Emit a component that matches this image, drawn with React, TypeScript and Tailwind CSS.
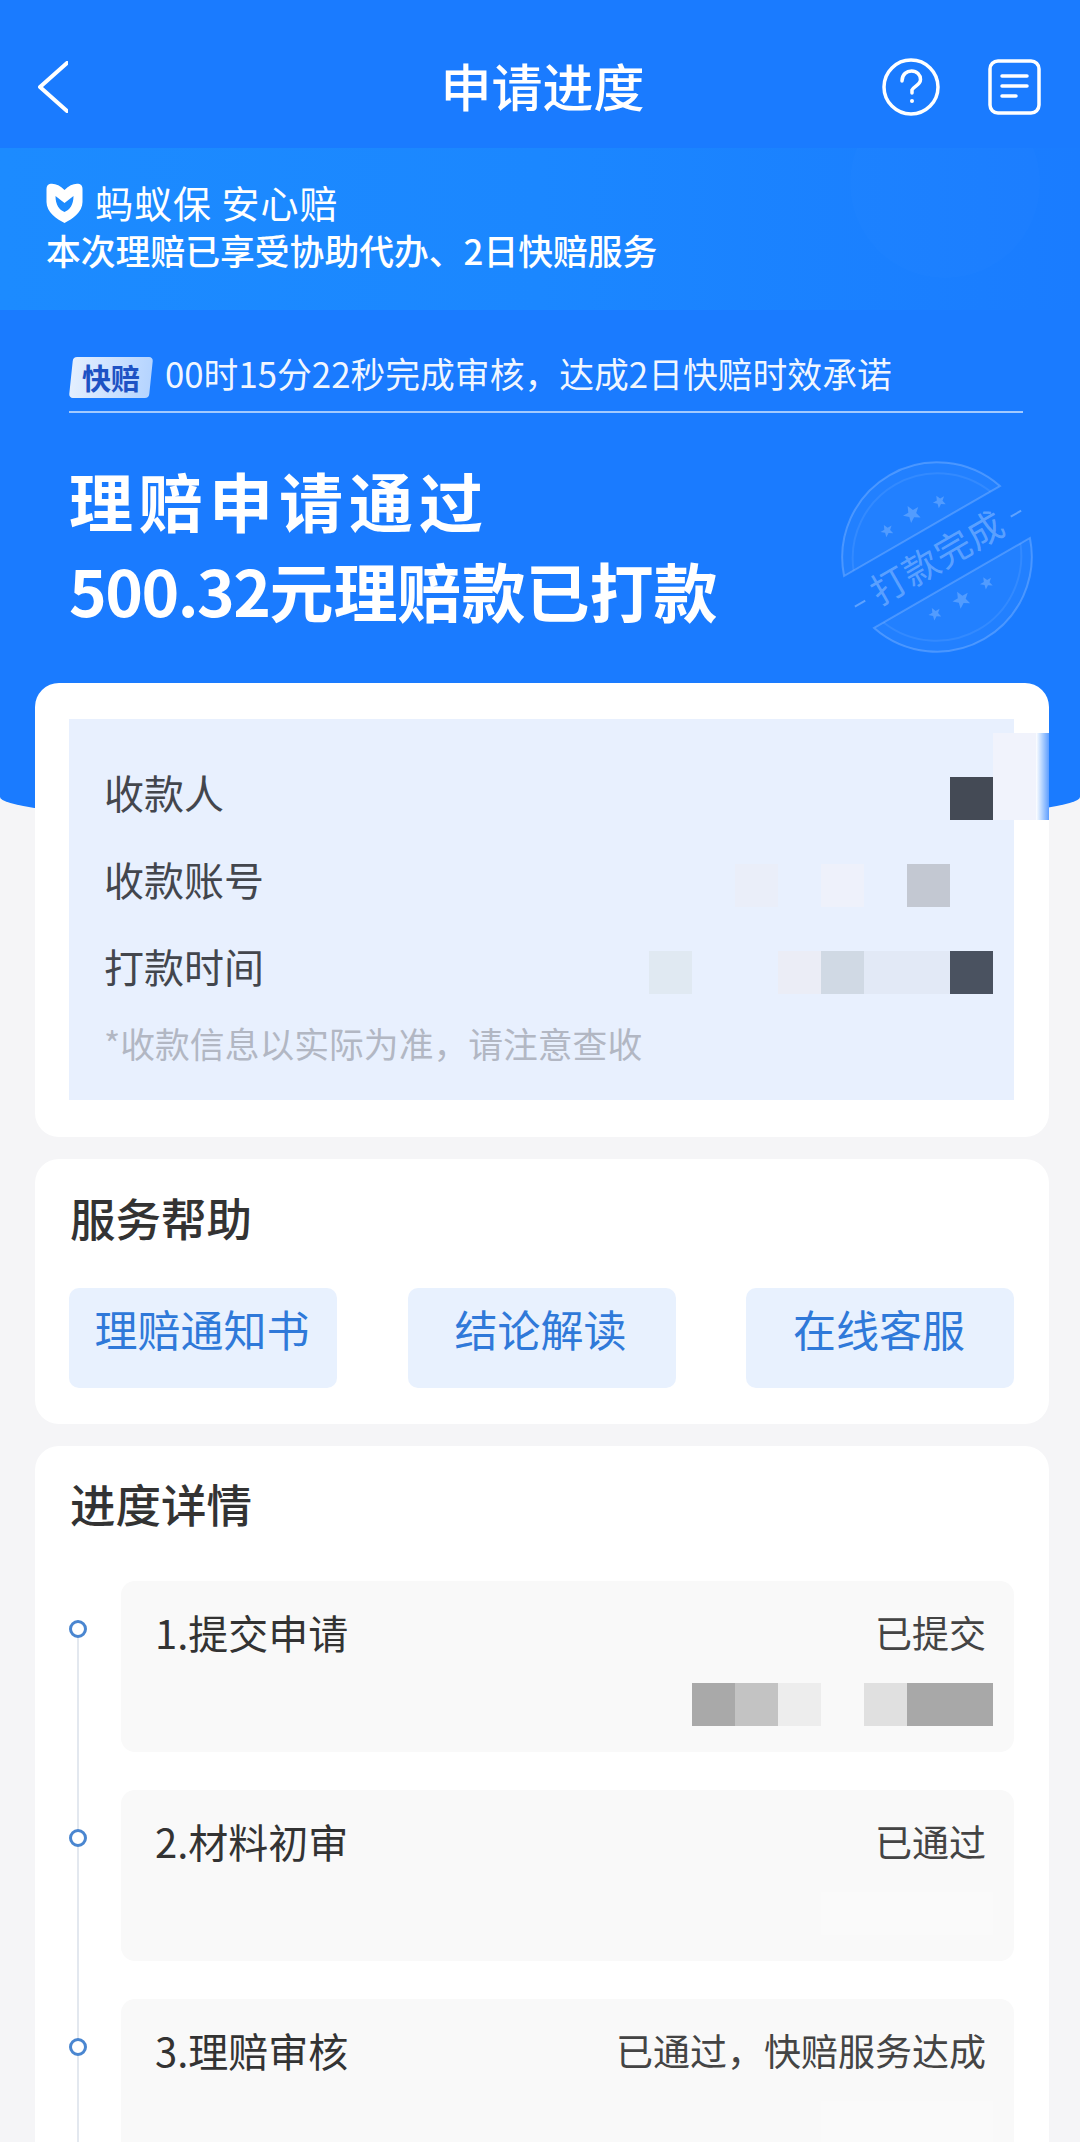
const stars = [
  [-30, -48, 0.8],
  [0, -50, 1.1],
  [30, -47, 0.8],
  [-30, 48, 0.8],
  [0, 49, 1.1],
  [30, 47, 0.8],
];

function Stamp() {
  return (
    <svg viewBox="-110 -110 220 220" className="absolute left-[827px] top-[447px] w-[220px] h-[220px]">
      <g transform="rotate(-30)" fill="none" stroke="#ffffff">
        <path d="M-90 -30 A95 95 0 0 1 90 -30 Z" fill="#ffffff" fillOpacity="0.04" strokeOpacity="0.2" strokeWidth="2" />
        <path d="M90 30 A95 95 0 0 1 -90 30 Z" fill="#ffffff" fillOpacity="0.04" strokeOpacity="0.2" strokeWidth="2" />
        <path d="M-79 -30 A85 85 0 0 1 79 -30" strokeOpacity="0.08" strokeWidth="2" />
        <path d="M79 30 A85 85 0 0 1 -79 30" strokeOpacity="0.08" strokeWidth="2" />
        <path d="M-96 2 H-84 M84 2 H96" strokeOpacity="0.3" strokeWidth="2" />
        {stars.map(([x, y, s], i) => (
          <polygon
            key={i}
            transform={`translate(${x} ${y}) scale(${s})`}
            points="0,-8 2.4,-2.5 8,-2.5 3.6,1.4 5,7 0,3.8 -5,7 -3.6,1.4 -8,-2.5 -2.4,-2.5"
            fill="#ffffff"
            fillOpacity="0.22"
            stroke="none"
          />
        ))}
        <text
          x="0"
          y="14"
          textAnchor="middle"
          fontSize="36"
          letterSpacing="1"
          fill="#ffffff"
          fillOpacity="0.3"
          stroke="none"
          fontFamily="'Noto Sans CJK SC', sans-serif"
        >
          打款完成
        </text>
      </g>
    </svg>
  );
}

function Header() {
  return (
    <div className="h-[148px] pt-[26px] pl-[38px] pr-[39px] grid grid-cols-3 items-center">
      <svg viewBox="0 0 30 52" className="w-[30px] h-[52px]" fill="none" stroke="#ffffff" strokeWidth="4" strokeLinecap="round" strokeLinejoin="round">
        <path d="M29 2 L2 26 L29 50" />
      </svg>
      <div className="text-center text-[51px] leading-[60px] font-medium text-white pl-[6px] pb-[5px]">申请进度</div>
      <div className="flex justify-end items-center gap-[48px]">
        <svg viewBox="0 0 58 58" className="w-[58px] h-[58px]" fill="none" stroke="#ffffff" strokeWidth="3.5" strokeLinecap="round">
          <circle cx="29" cy="29" r="27" />
          <path d="M20 23 C20 16 25 13 29.5 13 C35 13 38.5 17 38.5 21.5 C38.5 27 32 28 30 32 V35" />
          <circle cx="30" cy="43" r="2" fill="#ffffff" stroke="none" />
        </svg>
        <svg viewBox="0 0 53 56" className="w-[53px] h-[56px]" fill="none" stroke="#ffffff" strokeWidth="3.5" strokeLinecap="round">
          <rect x="2" y="2" width="49" height="52" rx="8" />
          <path d="M14 17 H39 M14 27 H39 M14 37 H28" />
        </svg>
      </div>
    </div>
  );
}

function Banner() {
  return (
    <div className="relative h-[162px] pl-[46px] pt-[32px] bg-gradient-to-r from-[#1c8bff] via-[#1b87ff] to-[#1a7cff] overflow-hidden">
      <div className="absolute left-[850px] -top-[60px] w-[190px] h-[190px] rounded-full bg-white/[0.012]"></div>
      <div className="flex items-center gap-[12px] h-[44px]">
        <svg viewBox="0 0 36 41" className="w-[37px] h-[41px]">
          <path
            d="M3 2 C8 1 13 3 18 8 C23 3 28 1 33 2 Q36 3 36 7 V20 C36 30 26 37 18 41 C10 37 0 30 0 20 V7 Q0 3 3 2 Z"
            fill="#ffffff"
          />
          <path d="M9 14 C9 23 13 28 18 30 C23 28 27 23 27 14 L18 21 Z" fill="#1c8bff" />
        </svg>
        <div className="text-[38px] leading-[44px] text-white tracking-[1px]">蚂蚁保 安心赔</div>
      </div>
      <div className="text-[34.8px] leading-[40px] font-medium text-white mt-[6px]">本次理赔已享受协助代办、2日快赔服务</div>
    </div>
  );
}

function Hero() {
  return (
    <div className="px-[69px] pt-[47px]">
      <div className="flex items-center gap-[14px]">
        <div className="ml-[2px] w-[80px] h-[41px] -skew-x-[6deg] rounded-[4px] bg-gradient-to-r from-[#e4effe] to-[#b5d4ff] flex items-center justify-center">
          <span className="skew-x-[6deg] text-[29px] leading-[41px] font-bold text-[#1d52c4]">快赔</span>
        </div>
        <span className="text-[34.8px] leading-[40px] text-white/95 -mt-[9px]">00时15分22秒完成审核，达成2日快赔时效承诺</span>
      </div>
      <div className="mt-[13px] h-[2px] w-[954px] bg-white/60"></div>
      <div className="mt-[42px] font-bold text-white">
        <div className="text-[64px] leading-[89px] tracking-[6px]">理赔申请通过</div>
        <div className="mt-[1px] text-[64px] leading-[89px]">
          <span className="-tracking-[1.5px]">500.32</span>
          <span>元理赔款已打款</span>
        </div>
      </div>
    </div>
  );
}

function Cells({ cells }: { cells: string[] }) {
  return (
    <div className="flex h-[43px] mt-[13px]">
      {cells.map((c, i) => (
        <div key={i} className={`w-[43px] ${c}`}></div>
      ))}
    </div>
  );
}

const payRows = [
  { label: "收款人", cells: ["bg-[#444a55]"] },
  {
    label: "收款账号",
    cells: ["bg-[#eaeef9]", "bg-transparent", "bg-[#eef1fb]", "bg-transparent", "bg-[#c3c8d2]", "bg-transparent"],
  },
  {
    label: "打款时间",
    cells: [
      "bg-[#e0e9f2]",
      "bg-transparent",
      "bg-transparent",
      "bg-[#ebedf6]",
      "bg-[#d0d9e4]",
      "bg-[#e2e9f6]",
      "bg-[#e2e9f6]",
      "bg-[#4a5260]",
    ],
  },
];

function PayCard() {
  return (
    <div className="relative -mt-[145px] ml-[35px] mr-[31px] h-[454px] rounded-[24px] bg-white pt-[36px] pl-[34px] pr-[35px] overflow-hidden">
      <div className="h-[381px] bg-[#e8f0fe] pt-[29px] pl-[35px] pr-[21px]">
        {payRows.map((r) => (
          <div key={r.label} className="h-[87px] flex items-center justify-between">
            <span className="text-[40px] leading-[50px] text-[#43464d]">{r.label}</span>
            <Cells cells={r.cells} />
          </div>
        ))}
        <div className="mt-[9px] text-[34.8px] leading-[50px] text-[#b2b7c3]">*收款信息以实际为准，请注意查收</div>
      </div>
      <div className="absolute left-[958px] top-[50px] w-[43px] h-[87px] bg-[#f1f3fc]"></div>
      <div className="absolute left-[1001px] top-[50px] w-[13px] h-[87px] bg-gradient-to-r from-white to-[#5d9dff]"></div>
    </div>
  );
}

function ServiceCard() {
  return (
    <div className="mt-[22px] ml-[35px] mr-[31px] h-[265px] rounded-[24px] bg-white pt-[28px] pl-[34px] pr-[35px]">
      <div className="pl-[1px] text-[45.5px] leading-[60px] font-medium text-[#333333]">服务帮助</div>
      <div className="mt-[41px] flex justify-between">
        {["理赔通知书", "结论解读", "在线客服"].map((t) => (
          <div
            key={t}
            className="w-[268px] h-[100px] pb-[20px] pr-[2px] rounded-[10px] bg-[#e8f1fe] flex items-center justify-center text-[43px] leading-[50px] text-[#2f79d9]"
          >
            {t}
          </div>
        ))}
      </div>
    </div>
  );
}

const steps = [
  {
    name: "1.提交申请",
    status: "已提交",
    cells: [
      "bg-[#a9a9a9]",
      "bg-[#c3c3c3]",
      "bg-[#ededed]",
      "bg-transparent",
      "bg-[#e0e0e0]",
      "bg-[#a8a8a8]",
      "bg-[#a8a8a8]",
    ],
  },
  { name: "2.材料初审", status: "已通过", cells: ["bg-[#fafafa]", "bg-[#fafafa]", "bg-[#fafafa]", "bg-[#fafafa]"] },
  { name: "3.理赔审核", status: "已通过，快赔服务达成", cells: ["bg-[#fafafa]", "bg-[#fafafa]", "bg-[#fafafa]", "bg-[#fafafa]"] },
];

function ProgressCard() {
  return (
    <div className="mt-[22px] ml-[35px] mr-[31px] rounded-[24px] bg-white pt-[27px] pb-[40px] pl-[34px] pr-[35px]">
      <div className="pl-[1px] text-[45.5px] leading-[60px] font-medium text-[#333333]">进度详情</div>
      <div className="mt-[48px] flex flex-col gap-[38px]">
        {steps.map((s) => (
          <div key={s.name} className="flex gap-[34px]">
            <div className="w-[18px] flex flex-col items-center">
              <div className="mt-[39px] w-[18px] h-[18px] rounded-full border-[3px] border-[#4a86d0] bg-white"></div>
              <div className="flex-1 w-[2px] -mb-[77px] bg-[#e3e8ef]"></div>
            </div>
            <div className="flex-1 h-[171px] rounded-[14px] bg-[#f9f9f9] pt-[26px] pl-[34px] pr-[21px]">
              <div className="flex justify-between items-center pr-[7px]">
                <span className="text-[40px] leading-[50px] text-[#333333]">{s.name}</span>
                <span className="text-[37px] leading-[50px] text-[#444444]">{s.status}</span>
              </div>
              <div className="mt-[13px] flex justify-end">
                <Cells cells={s.cells} />
              </div>
            </div>
          </div>
        ))}
      </div>
    </div>
  );
}

export default function App() {
  return (
    <div className="relative w-[1080px] h-[2142px] overflow-hidden bg-[#f5f5f7] font-['Noto_Sans_CJK_SC',sans-serif]">
      <div className="relative h-[828px] bg-[#1a7bff] rounded-b-[50%_31px]">
        <Header />
        <Banner />
        <Hero />
      </div>
      <Stamp />
      <PayCard />
      <ServiceCard />
      <ProgressCard />
    </div>
  );
}
